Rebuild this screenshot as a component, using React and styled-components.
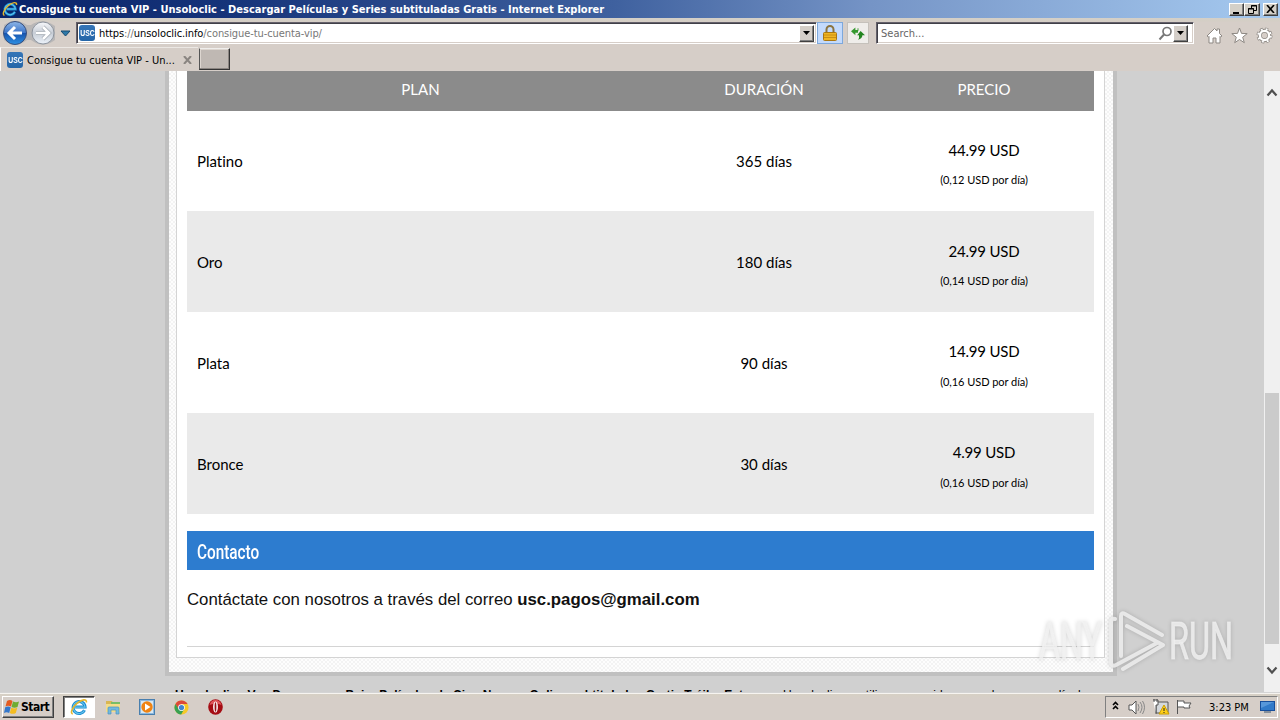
import React from 'react';
import styled, { createGlobalStyle } from 'styled-components';

const GlobalStyles = createGlobalStyle`
    *{
        box-sizing: border-box;
    }
    body{
        margin: 0;
        overflow: hidden;
        background: #d0d0d0;
    }
`;

const ScreenStyles = styled.div`
    position: relative;
    width: 1280px;
    height: 720px;
    display: flex;
    flex-direction: column;
    overflow: hidden;
    font-family: 'DejaVu Sans Condensed', 'DejaVu Sans', sans-serif;
    font-size: 11px;
    color: #000;
    svg{
        display: block;
        flex: none;
    }
`;

const Label = styled.span`
    display: block;
    white-space: nowrap;
    letter-spacing: ${(p) => p.$spacing || 0}px;
`;

/* window chrome */
const TitleBar = styled.div`
    flex: none;
    height: 18px;
    display: flex;
    align-items: center;
    padding: 0 2px 0 2px;
    background: linear-gradient(90deg, #0a246a 0%, #16347a 18%, #3f619f 48%, #7594c6 68%, #a6caf0 100%);
    color: #fff;
    font-weight: bold;
    ${Label}{
        flex: 1;
        margin-left: 1px;
    }
`;

const WindowButton = styled.div`
    width: ${(p) => p.$width || 15}px;
    height: 13px;
    margin-left: ${(p) => p.$gap || 0}px;
    display: flex;
    align-items: center;
    justify-content: center;
    background: #d4d0c8;
    border: 1px solid;
    border-color: #fff #404040 #404040 #fff;
    box-shadow: inset -1px -1px #808080;
`;

const NavBar = styled.div`
    flex: none;
    height: 29px;
    display: flex;
    padding: 4px 7px 0 2px;
    background: linear-gradient(#d4d0c8 0, #d4cec5 3px, #d6cec8 4px);
`;

const NavArrows = styled.div`
    width: 74px;
    margin-top: -2px;
`;

const Field = styled.div`
    width: ${(p) => p.$width}px;
    height: 22px;
    display: flex;
    align-items: center;
    background: #fff;
    border: 1px solid;
    border-color: #64606a #fff #fff #64606a;
    box-shadow: inset 1px 1px #404048, inset -1px -1px #d6cec8;
`;

const AddressField = styled(Field)`
    padding: 1px 2px;
    ${Label}{
        flex: 1;
        margin-left: 4px;
        padding-top: 1px;
        color: #777;
    }
    b{
        font-weight: normal;
        color: #000;
    }
`;

const SearchField = styled(Field)`
    margin-left: 7px;
    padding: 1px 5px 1px 4px;
    color: #666;
    ${Label}{
        flex: 1;
        padding-top: 1px;
    }
`;

const DropButton = styled.div`
    width: 15px;
    height: 17px;
    display: flex;
    align-items: center;
    justify-content: center;
    background: #d4cec8;
    border: 1px solid;
    border-color: #fff #404040 #404040 #fff;
    box-shadow: inset -1px -1px #808080;
`;

const ToolButton = styled.div`
    width: ${(p) => (p.$active ? 26 : 22)}px;
    height: 22px;
    margin-left: ${(p) => (p.$active ? 0 : 4)}px;
    display: flex;
    align-items: center;
    justify-content: center;
    background: ${(p) => (p.$active ? '#c3dafc' : '#efedea')};
    border: 1px solid ${(p) => (p.$active ? '#7da8dc' : '#c5c1bb')};
`;

const CommandIcons = styled.div`
    display: flex;
    gap: 8px;
    margin: 5px 0 0 auto;
`;

const SiteBadge = styled.div`
    flex: none;
    width: 16px;
    height: 16px;
    display: flex;
    justify-content: center;
    border-radius: 3px;
    background: linear-gradient(#3575b7, #2566a8);
    color: #fff;
    font: bold 9px/16px 'Liberation Sans', sans-serif;
    span{
        transform: scaleX(0.76);
    }
`;

const TabBar = styled.div`
    flex: none;
    height: 24px;
    display: flex;
    align-items: flex-start;
    background: #d6cec8;
`;

const Tab = styled.div`
    width: 198px;
    height: 24px;
    display: flex;
    align-items: center;
    padding: 1px 6px 0 6px;
    border-top: 1px solid #ece8e4;
    border-left: 1px solid #fff;
    ${Label}{
        flex: 1;
        margin-left: 4px;
    }
`;

const NewTab = styled.div`
    width: 31px;
    height: 22px;
    margin: 1px 0 0 1px;
    background: #bfb8b3;
    border: 1px solid;
    border-color: #f0eeec #333 #333 #555;
    box-shadow: inset -1px -1px #8b8581, inset 1px 1px #ddd6d0;
`;

/* page */
const Viewport = styled.div`
    flex: none;
    height: 621px;
    display: flex;
    overflow: hidden;
    background: #d0d0d0;
`;

const PageArea = styled.div`
    flex: 1;
    padding-left: 165px;
`;

const PageFrame = styled.div`
    width: 952px;
    height: 605px;
    padding: 0 8px 14px 7px;
    border: 4px solid #c0c0c0;
    border-top: 0;
    background: conic-gradient(#f3f3f3 25%, #fdfdfd 0 50%, #f3f3f3 0 75%, #fdfdfd 0) 0 0 / 4px 4px;
`;

const Content = styled.div`
    height: 587px;
    padding: 0 10px;
    border: 1px solid #d4d4d4;
    border-top: 0;
    background: #fff;
`;

const PlanRow = styled.div`
    height: ${(p) => p.$height}px;
    display: grid;
    grid-template-columns: 467px 220px 220px;
    align-items: center;
    background: ${(p) => p.$background};
    font-family: Lato, sans-serif;
    font-size: 15px;
    font-variant-ligatures: none;
    line-height: 20px;
    text-align: center;
`;

const HeaderRow = styled(PlanRow)`
    padding-bottom: 4px;
    color: #fff;
`;

const PlanName = styled.div`
    padding: 0 10px;
    text-align: left;
`;

const Price = styled.div`
    padding-top: ${(p) => p.$top}px;
    letter-spacing: -0.2px;
    small{
        display: block;
        margin-top: ${(p) => p.$gap}px;
        font-size: 11px;
        line-height: 20px;
        letter-spacing: -0.05px;
    }
`;

const SectionTitle = styled.div`
    height: 39px;
    margin-top: 17px;
    padding: 0 10px;
    background: #2d7ccf;
    color: #fff;
    font: 500 21px/43px Roboto, sans-serif;
    span{
        display: inline-block;
        transform: scaleX(0.73);
        transform-origin: left;
    }
`;

const ContactText = styled.div`
    height: 77px;
    padding-top: 20px;
    border-bottom: 1px solid #d4d4d4;
    font: 16.8px/20px 'Liberation Sans', Arial, sans-serif;
    color: #111;
`;

const FooterText = styled.div`
    display: flex;
    justify-content: space-between;
    width: 922px;
    margin: 11px 0 0 10px;
    font: 12px/16px 'Liberation Sans', Arial, sans-serif;
    white-space: nowrap;
    b{
        letter-spacing: 0.08px;
    }
    span{
        letter-spacing: 0.1px;
    }
`;

const ScrollBar = styled.div`
    width: 16px;
    display: flex;
    flex-direction: column;
    align-items: center;
    padding: 17px 0 17px;
    background: #f0f0f0;
`;

const Thumb = styled.div`
    width: 14px;
    height: 251px;
    margin: 296px 0 auto;
    background: #cbcbcb;
`;

const Watermark = styled.div`
    position: absolute;
    left: 1030px;
    top: 604px;
    filter: drop-shadow(0 0 2px rgba(0, 0, 0, 0.2));
`;

/* task bar */
const TaskBar = styled.div`
    flex: 1;
    display: flex;
    align-items: flex-start;
    padding: 3px 2px 0;
    border-top: 1px solid #d4d4d4;
    background: linear-gradient(#f6f4f0 0 1px, #d6d0c4 1px, #d6cec8 6px);
`;

const StartButton = styled.div`
    width: 52px;
    height: 22px;
    display: flex;
    align-items: center;
    gap: 1px;
    padding-left: 1px;
    background: #d6cec8;
    border: 1px solid;
    border-color: #fff #404040 #404040 #fff;
    box-shadow: inset -1px -1px #808080;
    font-size: 12px;
    font-weight: bold;
`;

const TaskItem = styled.div`
    width: ${(p) => (p.$active ? 32 : 34)}px;
    height: 22px;
    margin-left: ${(p) => (p.$active ? 9 : 0)}px;
    display: flex;
    align-items: center;
    justify-content: center;
    ${(p) => p.$active && `
        background: #fff;
        border: 1px solid;
        border-color: #404040 #fff #fff #404040;
        box-shadow: inset 1px 1px #808080;
        margin-right: 1px;
    `}
`;

const Tray = styled.div`
    width: 173px;
    height: 22px;
    margin-left: auto;
    display: flex;
    align-items: center;
    padding: 0 1px 0 6px;
    border: 1px solid;
    border-color: #808080 #fff #fff #808080;
    ${Label}{
        flex: 1;
        margin-left: 17px;
    }
`;

const plans = [
    { name: 'Platino', days: '365 días', price: '44.99 USD', daily: '(0,12 USD por día)', height: 100, top: 7, gap: 10 },
    { name: 'Oro', days: '180 días', price: '24.99 USD', daily: '(0,14 USD por día)', height: 101, top: 9, gap: 10 },
    { name: 'Plata', days: '90 días', price: '14.99 USD', daily: '(0,16 USD por día)', height: 101, top: 8, gap: 11 },
    { name: 'Bronce', days: '30 días', price: '4.99 USD', daily: '(0,16 USD por día)', height: 101, top: 8, gap: 11 },
];

function IELogo({ size }) {
    return (
        <svg width={size} height={size} viewBox="0 0 18 18" fill="none">
            <path d="M14.5 12.2a6 6 0 1 1 .6-3.1H5.2" stroke="#1689cf" strokeWidth="3" />
            <path d="M14.5 12.2a6 6 0 1 1 .6-3.1H5.2" stroke="#65c5ee" strokeWidth="1.2" />
            <path d="M2.8 16C-.1 15.5 2 9.5 7 5.3S17 .6 16.4 4.5" stroke="#e5b72e" strokeWidth="1.6" />
        </svg>
    );
}

function DownArrow() {
    return <svg width="7" height="4"><path d="M0 0h7L3.5 4z" fill="#000" /></svg>;
}

function BackForward() {
    return (
        <svg width="74" height="26" viewBox="0 0 74 26">
            <defs>
                <linearGradient id="back" x2="0" y2="1">
                    <stop stopColor="#8eb6e7" />
                    <stop offset=".48" stopColor="#3e76c9" />
                    <stop offset=".5" stopColor="#1652ad" />
                    <stop offset="1" stopColor="#2e91e4" />
                </linearGradient>
                <linearGradient id="forward" x2="0" y2="1">
                    <stop stopColor="#f7f8fb" />
                    <stop offset=".5" stopColor="#c7cdd6" />
                    <stop offset="1" stopColor="#edf3fa" />
                </linearGradient>
            </defs>
            <path d="M2 5Q13-3 25 5h4Q41-3 53 6v14Q41 29 29 20h-4Q13 29 2 20z" fill="#b9b7b7" />
            <circle cx="13" cy="13" r="11.5" fill="url(#back)" stroke="#384f7d" />
            <circle cx="41" cy="13" r="11" fill="url(#forward)" stroke="#8e959f" />
            <path d="M20 13H8M13 7l-6 6 6 6" fill="none" stroke="#fff" strokeWidth="3" />
            <path d="M34 13h12M41 7l6 6-6 6" fill="none" stroke="#a1a8b0" strokeWidth="4" />
            <path d="M34 13h12M41 7l6 6-6 6" fill="none" stroke="#fff" strokeWidth="2.6" />
            <path d="M59 11h9l-4.5 5z" fill="#2d78a8" stroke="#174a70" />
        </svg>
    );
}

function LockIcon() {
    return (
        <svg width="14" height="17" viewBox="0 0 14 17">
            <path d="M3.5 8V4.5a3.5 3.5 0 0 1 7 0V8" fill="none" stroke="#8b7440" strokeWidth="2" />
            <rect x=".5" y="7.5" width="13" height="8" rx="1" fill="#efb522" stroke="#aa7710" />
            <path d="M1 10h12M1 12.5h12" stroke="#c98e13" />
        </svg>
    );
}

function RefreshIcon() {
    return (
        <svg width="14" height="13" viewBox="0 0 16 14">
            <path d="M5 0 0 4.5 5 9V6h3V3H5z" fill="#35982e" />
            <path d="M5 4h3V1" fill="none" stroke="#35982e" />
            <path d="m11 4 5 5h-3q0 4-5 5 2-2 1-5H7z" fill="#238520" />
        </svg>
    );
}

function SearchIcon() {
    return (
        <svg width="15" height="15" viewBox="0 0 15 15" fill="none" stroke="#777">
            <circle cx="9" cy="5.5" r="4" strokeWidth="1.7" />
            <path d="m6 8.5-4.5 5" strokeWidth="2" />
        </svg>
    );
}

function HomeIcon() {
    return (
        <svg width="17" height="17" viewBox="0 0 17 17" fill="#fff" stroke="#8d8883">
            <path d="M1 9 8.5 1.5 11 4V2h2.5v4.5L16 9l-1.5 1-.5-.5V16h-4v-5H7v5H3V9.5l-.5.5z" />
        </svg>
    );
}

function StarIcon() {
    return (
        <svg width="17" height="17" viewBox="0 0 17 17" fill="#fff" stroke="#8d8883">
            <path d="m8.5 1 2 5.4 5.7.2-4.5 3.6 1.6 5.5-4.8-3.2-4.8 3.2 1.6-5.5L.8 6.6l5.7-.2z" />
        </svg>
    );
}

function GearIcon() {
    return (
        <svg width="17" height="17" viewBox="0 0 17 17">
            <circle cx="8.5" cy="8.5" r="6.5" fill="none" stroke="#8d8883" strokeWidth="3" strokeDasharray="2.8 2.305" />
            <circle cx="8.5" cy="8.5" r="4.7" fill="none" stroke="#8d8883" strokeWidth="4" />
            <circle cx="8.5" cy="8.5" r="6.3" fill="none" stroke="#fff" strokeWidth="2" strokeDasharray="1.8 3.15" strokeDashoffset="-.5" />
            <circle cx="8.5" cy="8.5" r="4.6" fill="none" stroke="#fff" strokeWidth="2.4" />
        </svg>
    );
}

function WindowsFlag() {
    return (
        <svg width="16" height="16" viewBox="0 0 16 16">
            <path d="M3 2q3-2 5.5 0L7 7.5Q4 6 1.5 7.5z" fill="#e45b20" />
            <path d="M9 2.5q3 1.5 6 0L13.5 8q-3 1.5-6 0z" fill="#70ac32" />
            <path d="M1.2 8.3q3-1.7 5.5 0L5.2 14Q2.5 12.3 0 14z" fill="#3477cb" />
            <path d="M7.3 8.8q3 1.5 6 0L11.8 14q-3 1.7-6 0z" fill="#f5bd21" />
        </svg>
    );
}

function FolderIcon() {
    return (
        <svg width="17" height="16" viewBox="0 0 17 16">
            <path d="M1 2h6l1 2h7v9H1z" fill="#d9b653" />
            <path d="M6 3h9v4H6z" fill="#79bd67" />
            <path d="M1 5h14v8H1z" fill="#f5dd89" />
            <path d="M3 15V9q0-1 1-1h9q1 0 1 1v6h-3v-4H6v4z" fill="#72b9df" stroke="#4b94bd" strokeWidth=".7" />
        </svg>
    );
}

function PlayerIcon() {
    return (
        <svg width="16" height="16" viewBox="0 0 16 16">
            <rect x=".5" y=".5" width="15" height="15" fill="#8cb8df" stroke="#497fae" />
            <rect x="2" y="2" width="12" height="12" fill="#d9e8f2" />
            <circle cx="8" cy="8" r="5.7" fill="#ef8313" />
            <path d="m6 4.5 5.5 3.5L6 11.5z" fill="#fff" />
        </svg>
    );
}

function ChromeIcon() {
    return (
        <svg width="15" height="15" viewBox="0 0 16 16">
            <circle cx="8" cy="8" r="7.5" fill="#f6c927" />
            <path d="M1.5 4.2A7.5 7.5 0 0 1 14.5 4.3H8L5 10z" fill="#dc493a" />
            <path d="M1.5 4.2A7.5 7.5 0 0 0 7.6 15.5L11 9.7H5z" fill="#38a052" />
            <circle cx="8" cy="8" r="3.6" fill="#fff" />
            <circle cx="8" cy="8" r="2.8" fill="#4285d0" />
        </svg>
    );
}

function OperaIcon() {
    return (
        <svg width="15" height="16" viewBox="0 0 15 16">
            <ellipse cx="7.5" cy="8" rx="7.3" ry="7.7" fill="#a50c13" />
            <path d="M1.5 6Q3 1 7.5 1T13.5 6Q8 3 1.5 6" fill="#df555a" />
            <ellipse cx="7.5" cy="8" rx="2.4" ry="5.5" fill="#fff" />
            <ellipse cx="7.5" cy="8" rx=".9" ry="4.8" fill="#961218" />
        </svg>
    );
}

function TrayIcons() {
    return (
        <svg width="80" height="18" viewBox="0 0 80 18" fill="none" stroke="#555">
            <path d="m1 7 2.5-2.5L6 7M1 11l2.5-2.5L6 11" stroke="#000" strokeWidth="1.6" />
            <path d="M17 7h3l4-4v13l-4-4h-3z" fill="#fff" />
            <path d="M26 6q2 3 0 7M28 4q4 5 0 11M30.5 3q4 6 0 13" stroke="#888" />
            <path d="M44 4h12v11H44z" fill="#d4d8dc" />
            <path d="M41 2h5v5h-2v9M42 1v3M45 1v3" fill="#fff" />
            <path d="m52 7 5 9H47z" fill="#ffcf18" stroke="#cc9e00" />
            <path d="M52 10v3M52 14v1" stroke="#222" />
            <path d="M65.5 16V2M66 3h6v2h7l-2 3 1 2h-6V9h-6" fill="#fff" />
        </svg>
    );
}

function PlayMark() {
    return (
        <svg width="220" height="74" viewBox="0 0 220 74">
            <g fontFamily="Roboto, sans-serif" fontSize="51" fill="#f2f2f2" fillOpacity=".8" stroke="#f2f2f2" strokeOpacity=".6" strokeWidth="1">
                <text x="9" y="55" textLength="63" lengthAdjust="spacingAndGlyphs">ANY</text>
                <text x="139" y="55" textLength="64" lengthAdjust="spacingAndGlyphs">RUN</text>
            </g>
            <path
                d="M85 15q-4-1-4 4v40q1 4 5 2L127 39M91 52V12q0-4 4-2l37 21M97 22l36 19-40 24"
                fill="none"
                stroke="#ececec"
                strokeOpacity=".9"
                strokeWidth="4"
                strokeLinejoin="round"
                strokeLinecap="round"
            />
        </svg>
    );
}

function Browser() {
    return (
        <>
            <TitleBar>
                <IELogo size={16} />
                <Label $spacing={0.015}>Consigue tu cuenta VIP - Unsoloclic - Descargar Películas y Series subtituladas Gratis - Internet Explorer</Label>
                <WindowButton>
                    <svg width="9" height="9"><path d="M1 7h6v2H1z" /></svg>
                </WindowButton>
                <WindowButton $width={16}>
                    <svg width="9" height="9" fill="none" stroke="#000"><path d="M3.5 3V.5h5v5H6M3 1h6M.5 3.5h5v5h-5zM0 4h6" /></svg>
                </WindowButton>
                <WindowButton $gap={3}>
                    <svg width="9" height="8"><path d="m1 0 7 8M8 0 1 8" stroke="#000" strokeWidth="1.6" /></svg>
                </WindowButton>
            </TitleBar>
            <NavBar>
                <NavArrows><BackForward /></NavArrows>
                <AddressField $width={741}>
                    <SiteBadge><span>USC</span></SiteBadge>
                    <Label $spacing={-0.08}><b>https</b>://<b>unsoloclic.info</b>/consigue-tu-cuenta-vip/</Label>
                    <DropButton><DownArrow /></DropButton>
                </AddressField>
                <ToolButton $active><LockIcon /></ToolButton>
                <ToolButton><RefreshIcon /></ToolButton>
                <SearchField $width={318}>
                    <Label>Search...</Label>
                    <SearchIcon />
                    <DropButton><DownArrow /></DropButton>
                </SearchField>
                <CommandIcons>
                    <HomeIcon />
                    <StarIcon />
                    <GearIcon />
                </CommandIcons>
            </NavBar>
            <TabBar>
                <Tab>
                    <SiteBadge><span>USC</span></SiteBadge>
                    <Label>Consigue tu cuenta VIP - Un...</Label>
                    <svg width="9" height="8"><path d="m1 0 7 8M8 0 1 8" stroke="#8a8581" strokeWidth="2" /></svg>
                </Tab>
                <NewTab />
            </TabBar>
        </>
    );
}

function Page() {
    return (
        <Viewport>
            <PageArea>
                <PageFrame>
                    <Content>
                        <HeaderRow $height={40} $background="#8b8b8b">
                            <div>PLAN</div>
                            <div>DURACIÓN</div>
                            <div>PRECIO</div>
                        </HeaderRow>
                        {plans.map((plan, i) => (
                            <PlanRow key={plan.name} $height={plan.height} $background={i % 2 ? '#eaeaea' : '#fff'}>
                                <PlanName>{plan.name}</PlanName>
                                <div>{plan.days}</div>
                                <Price $top={plan.top} $gap={plan.gap}>
                                    {plan.price}
                                    <small>{plan.daily}</small>
                                </Price>
                            </PlanRow>
                        ))}
                        <SectionTitle><span>Contacto</span></SectionTitle>
                        <ContactText>
                            Contáctate con nosotros a través del correo <b>usc.pagos@gmail.com</b>
                        </ContactText>
                    </Content>
                </PageFrame>
                <FooterText>
                    <b>Unsoloclic - Ver, Descargar y Bajar Películas de Cine Nuevas Online subtituladas Gratis Tráiler Estrenos.</b>
                    <span>Unsoloclic no utiliza su servidor para almacenar películas.</span>
                </FooterText>
            </PageArea>
            <ScrollBar>
                <svg width="12" height="9"><path d="m1.5 7.5 4.5-5 4.5 5" fill="none" stroke="#505050" strokeWidth="2.2" /></svg>
                <Thumb />
                <svg width="12" height="9"><path d="m1.5 1.5 4.5 5 4.5-5" fill="none" stroke="#505050" strokeWidth="2.2" /></svg>
            </ScrollBar>
        </Viewport>
    );
}

export default function App() {
    return (
        <ScreenStyles>
            <GlobalStyles />
            <Browser />
            <Page />
            <TaskBar>
                <StartButton><WindowsFlag /><Label $spacing={-0.5}>Start</Label></StartButton>
                <TaskItem $active><IELogo size={18} /></TaskItem>
                <TaskItem><FolderIcon /></TaskItem>
                <TaskItem><PlayerIcon /></TaskItem>
                <TaskItem><ChromeIcon /></TaskItem>
                <TaskItem><OperaIcon /></TaskItem>
                <Tray>
                    <TrayIcons />
                    <Label>3:23 PM</Label>
                    <svg width="16" height="14" viewBox="0 0 16 14">
                        <path d="M0 1h15v10H0z" fill="#174e9b" />
                        <path d="M1 2h13v8H1z" fill="#317ac9" />
                        <path d="M1 2h13L1 8z" fill="#5797da" />
                        <path d="M4 11h7v2H4z" fill="#87909b" />
                    </svg>
                </Tray>
            </TaskBar>
            <Watermark><PlayMark /></Watermark>
        </ScreenStyles>
    );
}
